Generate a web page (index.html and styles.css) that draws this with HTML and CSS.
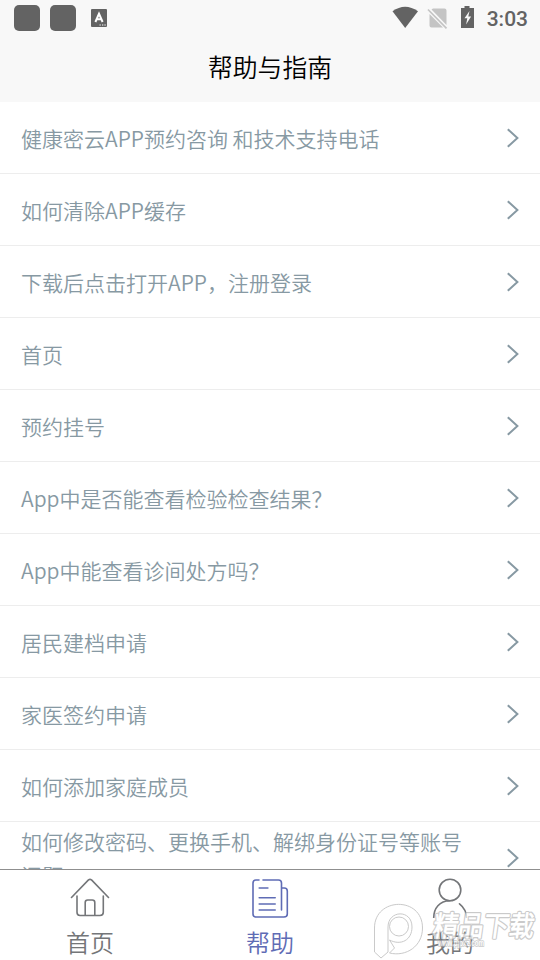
FILE: index.html
```html
<!DOCTYPE html>
<html lang="zh-CN">
<head>
<meta charset="utf-8">
<title>帮助与指南</title>
<link rel="stylesheet" href="styles.css">
</head>
<body>
<svg class="defs" aria-hidden="true"><symbol id="chevron" viewBox="0 0 14 20"><path d="M1.8 1.3 11.4 10 1.8 18.7"/></symbol></svg>
<div class="app">
  <header class="top">
    <div class="status">
      <span class="block"></span><span class="block"></span>
      <svg class="keyboard" width="16" height="18" viewBox="0 0 16 18"><rect width="16" height="18" rx="1" fill="#636363"/><path d="M4.4 13 8 4.8 11.6 13M5.8 10.2h4.4" fill="none" stroke="#fff" stroke-width="2"/><path d="M8.5 16h1.3M11 16h1.3M13.4 16h1.3" stroke="#fff" stroke-width="1.2"/></svg>
      <svg class="system" width="88" height="24" viewBox="0 0 88 24">
        <path d="M.5 5.3Q13-3.7 26 5.3L13.2 22Z" fill="#636363"/>
        <path d="M41 2.500h11.500q2 0 2 2v14.500L39.500 3.500ZM37.500 8 51 21.500H39.500q-2 0-2-2Z" fill="#c4c4c4"/><path d="m36 3.500 18.500 18.800" stroke="#c4c4c4" stroke-width="1.700"/>
        <path d="M69 2h3.500V0h5v2H82v20H69Z" fill="#636363"/><path d="m77.500 5-5 7.200h2.800l-1.200 6.300 5-8h-2.800Z" fill="#f8f8f8"/>
      </svg>
      <span class="time">3:03</span>
    </div>
    <h1>帮助与指南</h1>
  </header>
  <main class="list">
    <div class="row"><span>健康密云APP预约咨询 和技术支持电话</span><svg><use href="#chevron"/></svg></div>
    <div class="row"><span>如何清除APP缓存</span><svg><use href="#chevron"/></svg></div>
    <div class="row"><span>下载后点击打开APP，注册登录</span><svg><use href="#chevron"/></svg></div>
    <div class="row"><span>首页</span><svg><use href="#chevron"/></svg></div>
    <div class="row"><span>预约挂号</span><svg><use href="#chevron"/></svg></div>
    <div class="row"><span>App中是否能查看检验检查结果？</span><svg><use href="#chevron"/></svg></div>
    <div class="row"><span>App中能查看诊间处方吗？</span><svg><use href="#chevron"/></svg></div>
    <div class="row"><span>居民建档申请</span><svg><use href="#chevron"/></svg></div>
    <div class="row"><span>家医签约申请</span><svg><use href="#chevron"/></svg></div>
    <div class="row"><span>如何添加家庭成员</span><svg><use href="#chevron"/></svg></div>
    <div class="row long"><span>如何修改密码、更换手机、解绑身份证号等账号问题</span><svg><use href="#chevron"/></svg></div>
  </main>
  <nav class="tabs">
    <div class="tab"><svg width="40" height="40" viewBox="0 0 40 40"><path d="m1.500 19.500 17-17.600q1.500-1 3 0l17 17.600M7 18v16.300Q7 37.500 10 37.500h20q3.300 0 3.300-3.200V18M15.200 37V24.500q0-2.500 2.500-2.500h4.600q2.500 0 2.500 2.500V37"/></svg><span>首页</span></div>
    <div class="tab active"><svg width="40" height="40" viewBox="0 0 40 40"><path d="M9 2H6Q3 2 3 5v31q0 3 3 3h28q3.300 0 3.300-3V13q0-3-3-3H31.500M13 2h15.500q3 0 3 3v27M9.200 10h8.700M9.200 19.800h16M9.200 26h16M9.200 32h16"/></svg><span>帮助</span></div>
    <div class="tab"><svg width="40" height="40" viewBox="0 0 40 40"><circle cx="20" cy="12" r="10.800"/><path d="M20 22.800C9.500 23 3.700 30 3.700 40M29.500 25.800q7 5.500 7 14.200"/></svg><span>我的</span></div>
  </nav>
  <svg class="watermark" width="170" height="58" viewBox="0 0 170 58">
    <path d="M4.500 50V26C4.500-5 52.500-6 52.500 26c0 18-16 29-33 25l5-5-5-8C31 44 42 38 42 25c0-18-24-17-24 0v25l-7 6Z"/>
    <circle cx="29" cy="24.500" r="9.500"/>
    <text class="site" x="68" y="44" textLength="46" lengthAdjust="spacingAndGlyphs">www.pjpxz.com</text>
    <text class="brand" transform="translate(62 34) skewX(-8)" textLength="101" lengthAdjust="spacingAndGlyphs">精品下载</text>
  </svg>
</div>
</body>
</html>
```
FILE: styles.css
```css
* { box-sizing: border-box; }
body { margin: 0; background: #fff; font-family: "Noto Sans CJK SC DemiLight", "Noto Sans CJK SC", sans-serif; font-weight: 350; }
.defs { position: absolute; width: 0; height: 0; }
.app { position: relative; display: flex; flex-direction: column; width: 540px; height: 960px; overflow: hidden; }
.top { flex: none; height: 102px; background: #f8f8f8; }
.status { display: flex; align-items: center; height: 36px; padding: 0 12px 0 14px; }
.block { width: 26px; height: 26px; margin-right: 10px; border-radius: 5px; background: #636363; }
.keyboard { margin-left: 5px; }
.system { margin-left: auto; margin-top: -1px; overflow: visible; }
.time { width: 43px; margin-left: 5px; color: #636363; font: 500 21px/36px Roboto, sans-serif; text-align: right; padding-top: 2px; }
h1 { margin: 0; color: #000; font-size: 24.8px; font-weight: 400; line-height: 61px; text-align: center; }
.list { flex: 1; min-height: 0; overflow: hidden; }
.row { display: flex; align-items: center; justify-content: space-between; height: 72px; padding: 1px 20px 0 21px; border-bottom: 1px solid #ededed; color: #8799a3; font-size: 21px; line-height: 30px; }
.row span { width: 445px; }
.row.long span { line-height: 34px; }
.row svg { width: 14px; height: 20px; fill: none; stroke: #8799a3; stroke-width: 2; }
.tabs { flex: none; display: flex; height: 91px; border-top: 1px solid #8f8f8f; background: #fff; }
.tab { flex: 1; display: flex; flex-direction: column; align-items: center; padding-top: 8px; color: #747679; font-size: 24px; line-height: 34px; }
.tab svg { fill: none; stroke: currentColor; stroke-width: 1.6; stroke-linecap: round; stroke-linejoin: round; }
.tab span { margin-top: 7px; font-weight: 400; }
.tab.active { color: #5f6cb5; }
.watermark { position: absolute; left: 370px; top: 902px; opacity: .7; fill: rgba(255, 255, 255, .5); stroke: #b4b4b4; stroke-width: 1; }
.brand { font-size: 28px; font-weight: 900; stroke-width: 2.4; stroke-linejoin: round; paint-order: stroke; fill: #fff; }
.site { font: bold 9px "Liberation Sans", sans-serif; stroke-width: 1.6; paint-order: stroke; fill: #fff; }
```
